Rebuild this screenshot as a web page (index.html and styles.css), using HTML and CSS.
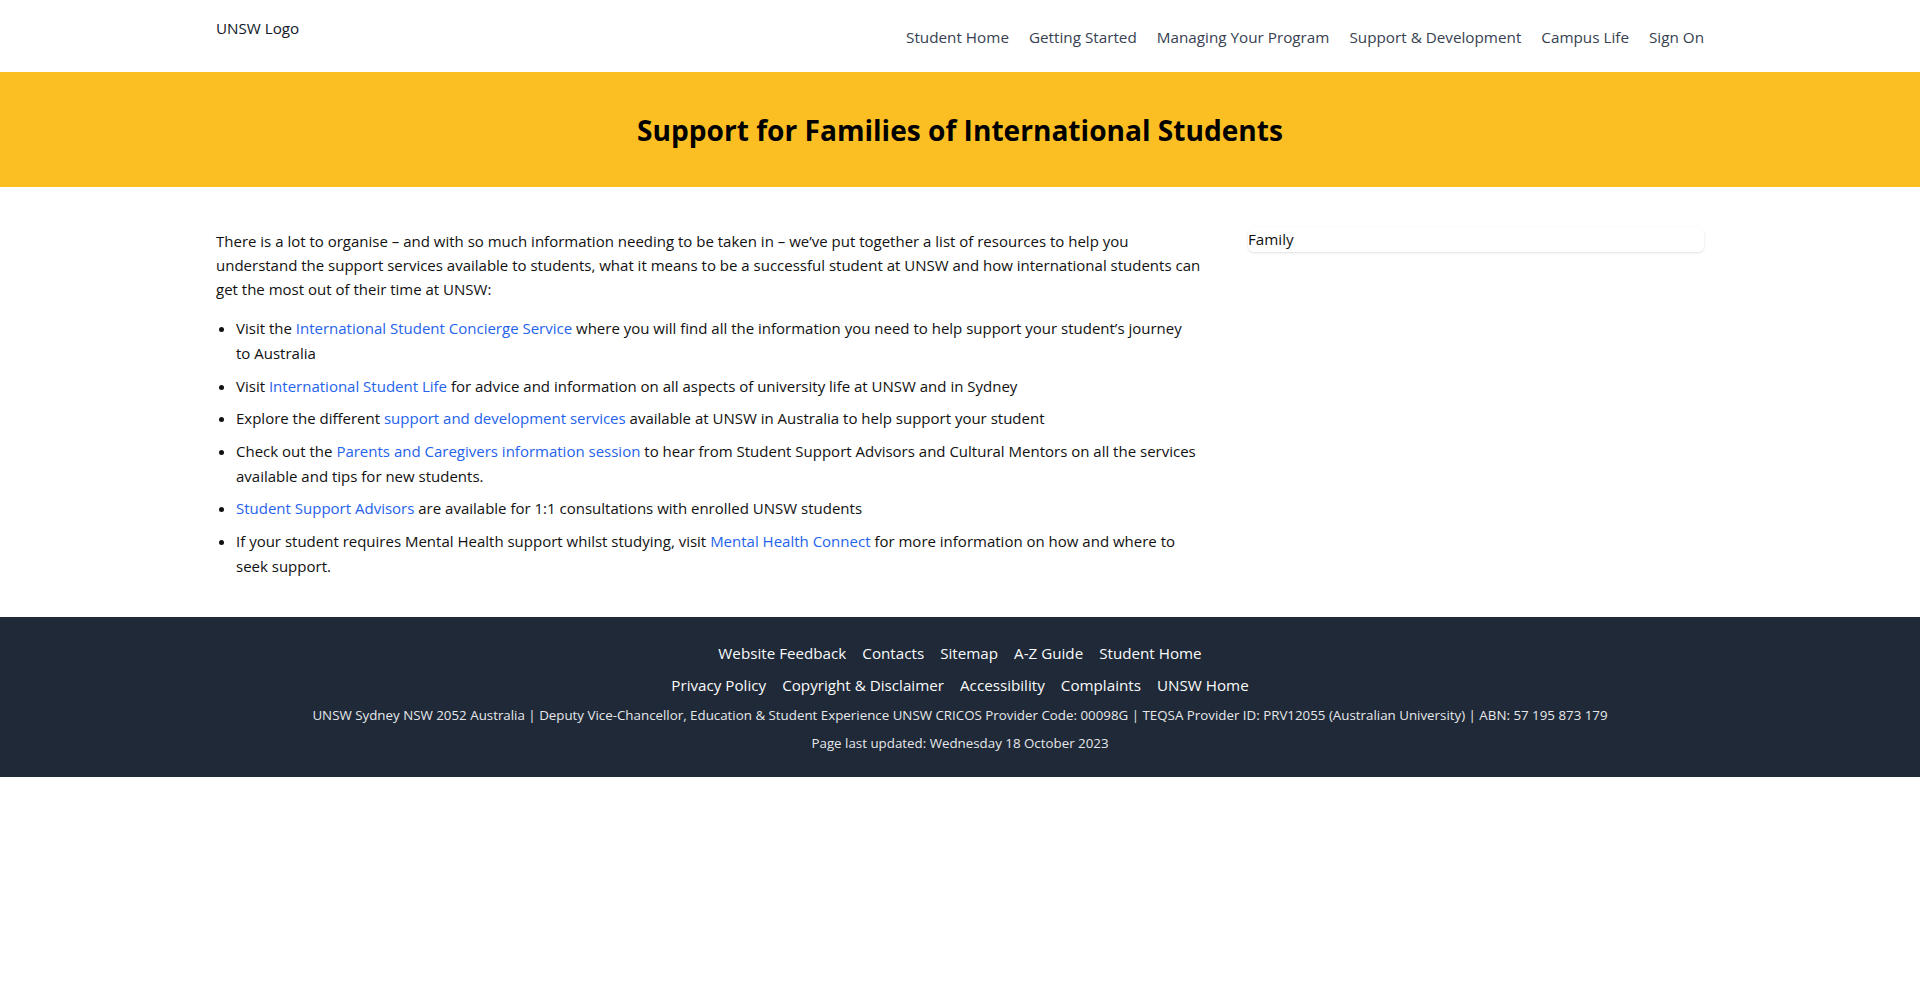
FILE: index.html
```html
<!DOCTYPE html>
<html lang="en">
<head>
<meta charset="utf-8">
<title>Support for Families of International Students</title>
<link rel="stylesheet" href="styles.css">
</head>
<body>
<header class="site-header">
  <div class="container header-inner">
    <a class="logo" href="#">UNSW Logo</a>
    <nav class="main-nav">
      <a href="#">Student Home</a>
      <a href="#">Getting Started</a>
      <a href="#">Managing Your Program</a>
      <a href="#">Support &amp; Development</a>
      <a href="#">Campus Life</a>
      <a href="#">Sign On</a>
    </nav>
  </div>
</header>

<section class="banner">
  <div class="container">
    <h1 class="banner-title">Support for Families of International Students</h1>
  </div>
</section>

<main class="container content">
  <article class="main-col">
    <p class="intro">There is a lot to organise – and with so much information needing to be taken in – we’ve put together a list of resources to help you understand the support services available to students, what it means to be a successful student at UNSW and how international students can get the most out of their time at UNSW:</p>
    <ul class="resource-list">
      <li>Visit the <a href="#">International Student Concierge Service</a> where you will find all the information you need to help support your student’s journey to Australia</li>
      <li>Visit <a href="#">International Student Life</a> for advice and information on all aspects of university life at UNSW and in Sydney</li>
      <li>Explore the different <a href="#">support and development services</a> available at UNSW in Australia to help support your student</li>
      <li>Check out the <a href="#">Parents and Caregivers information session</a> to hear from Student Support Advisors and Cultural Mentors on all the services available and tips for new students.</li>
      <li><a href="#">Student Support Advisors</a> are available for 1:1 consultations with enrolled UNSW students</li>
      <li>If your student requires Mental Health support whilst studying, visit <a href="#">Mental Health Connect</a> for more information on how and where to seek support.</li>
    </ul>
  </article>
  <aside class="side-col">
    <div class="tag-box">Family</div>
  </aside>
</main>

<footer class="site-footer">
  <div class="container footer-inner">
    <nav class="footer-links">
      <a href="#">Website Feedback</a>
      <a href="#">Contacts</a>
      <a href="#">Sitemap</a>
      <a href="#">A-Z Guide</a>
      <a href="#">Student Home</a>
    </nav>
    <nav class="footer-links">
      <a href="#">Privacy Policy</a>
      <a href="#">Copyright &amp; Disclaimer</a>
      <a href="#">Accessibility</a>
      <a href="#">Complaints</a>
      <a href="#">UNSW Home</a>
    </nav>
    <p class="footer-small">UNSW Sydney NSW 2052 Australia | Deputy Vice-Chancellor, Education &amp; Student Experience UNSW CRICOS Provider Code: 00098G | TEQSA Provider ID: PRV12055 (Australian University) | ABN: 57 195 873 179</p>
    <p class="footer-small">Page last updated: Wednesday 18 October 2023</p>
  </div>
</footer>
</body>
</html>
```

FILE: styles.css
```css
* { box-sizing: border-box; }

html, body {
  margin: 0;
  padding: 0;
}

body {
  font-family: "Open Sans", "Noto Sans", sans-serif;
  font-size: 15px;
  line-height: 24px;
  color: #111111;
  background: #ffffff;
}

a { text-decoration: none; color: inherit; }

.container {
  max-width: 1536px;
  margin: 0 auto;
  padding: 0 24px;
}

/* Header */
.site-header {
  height: 72px;
  background: #ffffff;
}

.header-inner {
  display: flex;
  justify-content: space-between;
  align-items: flex-start;
  padding-top: 16px;
}

.logo {
  font-size: 15.2px;
  line-height: 24px;
  color: #111827;
}

.main-nav {
  display: flex;
  gap: 20px;
  margin-top: 9px;
}

.main-nav a {
  font-size: 15.25px;
  line-height: 24px;
  color: #374151;
}

/* Banner */
.banner {
  background: #fbbf24;
  padding: 40px 0 39px;
}

.banner-title {
  margin: 0;
  text-align: center;
  font-size: 28.1px;
  line-height: 36px;
  font-weight: 700;
  color: #000000;
}

/* Content */
.content {
  display: grid;
  grid-template-columns: 1fr 456px;
  gap: 40px;
  padding-top: 40px;
  padding-bottom: 38px;
}

.main-col {
  min-width: 0;
  padding-top: 2px;
}

.intro {
  margin: 0 0 15px;
}

.resource-list {
  margin: 0;
  padding: 0 12px 0 20px;
  list-style: disc;
  line-height: 25px;
}

.resource-list li + li {
  margin-top: 7.5px;
}

.resource-list a {
  color: #2563eb;
}

.tag-box {
  background: #ffffff;
  border-radius: 6px;
  box-shadow: 0 1px 3px rgba(0, 0, 0, 0.1), 0 1px 2px -1px rgba(0, 0, 0, 0.1);
  font-size: 15.2px;
  line-height: 25px;
  color: #111111;
}

/* Footer */
.site-footer {
  background: #1f2937;
  color: #f3f4f6;
  padding: 24px 0;
}

.footer-inner {
  display: flex;
  flex-direction: column;
  align-items: center;
  gap: 8px;
}

.footer-links {
  display: flex;
  justify-content: center;
  gap: 16px;
}

.footer-links a {
  font-size: 15.2px;
  line-height: 24px;
  color: #f9fafb;
}

.footer-small {
  margin: 0;
  font-size: 13.33px;
  line-height: 20px;
  color: #e5e7eb;
  text-align: center;
}
```
